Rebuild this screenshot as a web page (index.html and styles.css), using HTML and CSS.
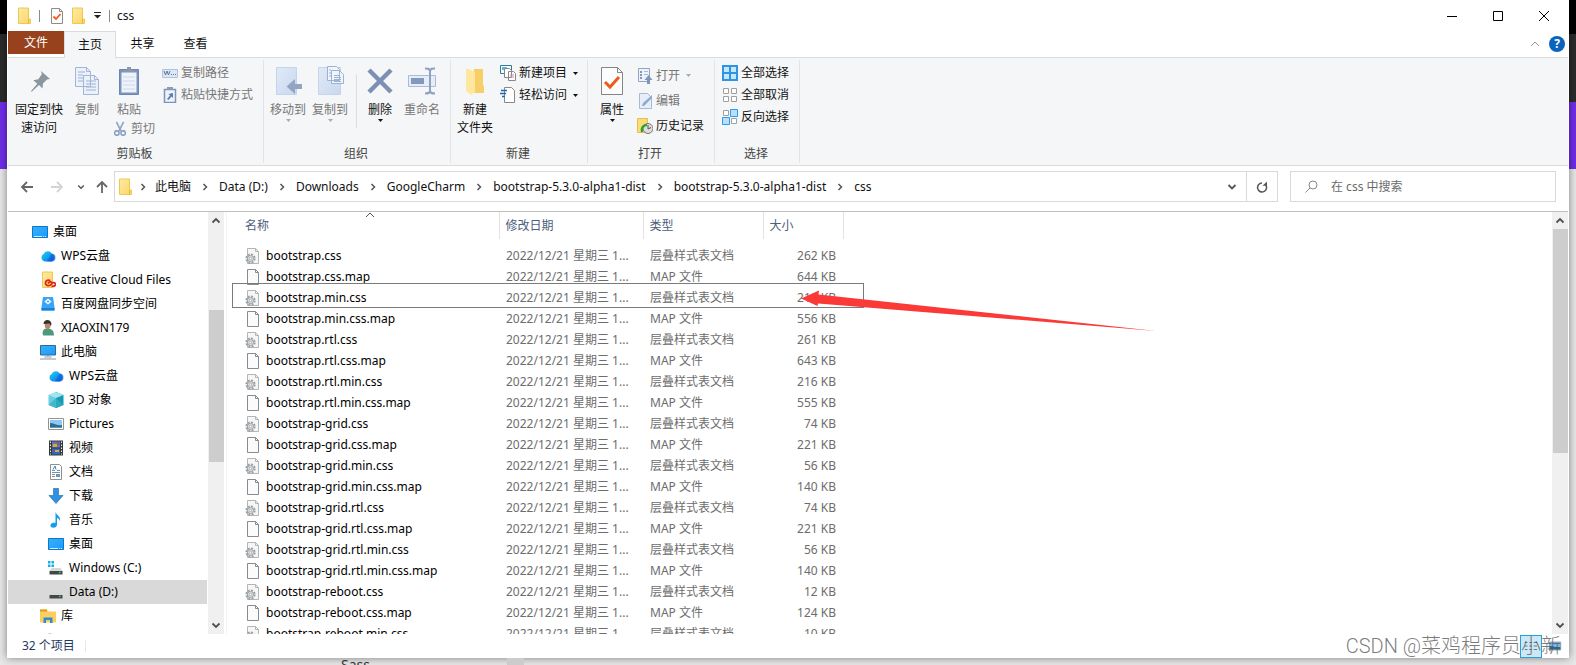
FILE: index.html
```html
<!DOCTYPE html>
<html lang="zh-CN">
<head>
<meta charset="utf-8">
<title>css</title>
<link rel="stylesheet" href="styles.css">
</head>
<body>
<svg class="sprite" aria-hidden="true">
  <defs>
    <linearGradient id="g-folder" x1="0" y1="0" x2="1" y2="1"><stop offset="0" stop-color="#ffeaa5"/><stop offset="1" stop-color="#fbd566"/></linearGradient>
    <linearGradient id="g-cloud" x1="0" y1="0" x2="1" y2="1"><stop offset="0" stop-color="#19d8e6"/><stop offset=".6" stop-color="#1296f0"/><stop offset="1" stop-color="#0a4fd0"/></linearGradient>
    <linearGradient id="g-screen" x1="0" y1="0" x2="1" y2="1"><stop offset="0" stop-color="#3bb0fb"/><stop offset=".5" stop-color="#2aa5fb"/><stop offset="1" stop-color="#149aff"/></linearGradient>
    <linearGradient id="g-pale" x1="0" y1="0" x2="1" y2="1"><stop offset="0" stop-color="#e0eaf8"/><stop offset="1" stop-color="#c9d8ef"/></linearGradient>
  </defs>
  <symbol id="folder" viewBox="0 0 16 18"><path d="M1.500 1h10v11h2v4.500h-12z" fill="url(#g-folder)" stroke="#ecca50"/><path d="M11.500 12v4.500" stroke="#e5b93a"/></symbol>
  <symbol id="check" viewBox="0 0 16 18"><path d="M2.500 1.500h8l3 3v12h-11z" fill="#fbfbfb" stroke="#8c8c8c"/><path d="M10.500 1.500v3h3" fill="none" stroke="#8c8c8c"/><path d="m4.500 9.500 2.500 2.500 4.500-5" fill="none" stroke="#f05a1e" stroke-width="1.800"/></symbol>
  <symbol id="caret" viewBox="0 0 5 3"><path d="M0 0h5L2.500 3z" fill="currentColor"/></symbol>
  <symbol id="chev" viewBox="0 0 8 8"><path d="m2.500 1 3 3-3 3" fill="none" stroke="currentColor" stroke-width="1.500"/></symbol>
  <symbol id="down" viewBox="0 0 10 10"><path d="m1.500 3 3.500 3.500L8.500 3" fill="none" stroke="currentColor" stroke-width="1.800"/></symbol>
  <symbol id="up" viewBox="0 0 10 10"><path d="M1.500 7 5 3.500 8.500 7" fill="none" stroke="currentColor" stroke-width="1.800"/></symbol>
  <symbol id="upthin" viewBox="0 0 10 10"><path d="M1 7l4-4 4 4" fill="none" stroke="currentColor"/></symbol>
  <symbol id="blank" viewBox="0 0 16 18"><path d="M2.500 1.500h8l3 3v12h-11z" fill="#fafbfc" stroke="#8b8b8b"/><path d="M10.500 1.500v3h3" fill="none" stroke="#8b8b8b"/></symbol>
  <symbol id="cssfile" viewBox="0 0 16 18"><path d="M2.500 1.500h8l3 3v12h-11z" fill="#f6f6f6" stroke="#b5b5b5"/><path d="M10.500 1.500v3h3" fill="none" stroke="#b5b5b5"/><circle cx="5.500" cy="11.500" r="4.200" fill="none" stroke="#9a9fa3" stroke-width="1.800" stroke-dasharray="2 1.300"/><circle cx="5.500" cy="11.500" r="3" fill="#e6e8e9" stroke="#969b9f"/><circle cx="5.500" cy="11.500" r="1.200" fill="#fff" stroke="#969b9f" stroke-width=".8"/></symbol>
  <symbol id="desktop" viewBox="0 0 16 16"><path d="M.5 2.500h15v11H.5z" fill="url(#g-screen)" stroke="#0a78c8"/><path d="M2 12.500h8m1 0h1m1 0h1" stroke="#d6efff"/></symbol>
  <symbol id="cloud" viewBox="0 0 16 16"><path d="M4.500 13.500a4 4 0 0 1-.8-7.500 4.500 4.500 0 0 1 8-.6A4.200 4.200 0 0 1 11.500 13.500z" fill="url(#g-cloud)"/><path d="M11.500 5.500a4 4 0 0 1 0 8H7z" fill="#0b5bd9" opacity=".6"/></symbol>
  <symbol id="cc" viewBox="0 0 16 18"><path d="M2.500 1h10v15.500h-10z" fill="url(#g-folder)" stroke="#ecca50"/><path d="M10.500 9.500c-4-1-5 1-5 2.500 0 3 4 3.500 6 1 1-1.500 3-2 4 0 .5 1.500-2 2.700-4 2.200M8 12.500c1-2 4-2.500 4.500.5" fill="none" stroke="#e0251b" stroke-width="1.800"/></symbol>
  <symbol id="baidu" viewBox="0 0 16 16"><path d="M3 1h10l1.500 10v3.500h-13V11z" fill="#3aa5f8"/><path d="M1.500 12h13v2.500h-13z" fill="#1683d8"/><path d="m8 2.500 3.500 3L8 8.500l-3.500-3z" fill="#fff"/><path d="m8 4.300 1.500 1.200L8 6.800 6.500 5.500z" fill="#3aa5f8"/></symbol>
  <symbol id="user" viewBox="0 0 16 18"><path d="M3 16c-1-3 0-6.500 4-6.500 5 0 7 2 7 7H3z" fill="#4c9a7c"/><path d="M4.500 4c0-2.500 6-2.500 6 0v3c0 4-5 4-5.500 1z" fill="#b98a6a"/><path d="M3.500 5c0-5 7.500-5.500 8 0l-.8 2L9.500 4.500z" fill="#37312e"/></symbol>
  <symbol id="pc" viewBox="0 0 16 16"><path d="M.5 1.500h15v9.500H.5z" fill="url(#g-screen)" stroke="#2c6d96"/><path d="M7 11.500h2M4.500 13h7M0 15h16" stroke="#8495a6"/></symbol>
  <symbol id="cube" viewBox="0 0 16 16"><path d="M8 0v16L.5 13V3z" fill="#69cfdf"/><path d="M8 0v16l7.500-3V3z" fill="#1599b4"/><path d="m.5 3 7.500 3 7.500-3L8 .3z" fill="#a2e5ee"/><path d="m8 6-7.500 7L8 16z" fill="#43b7cc"/><path d="m8 6 7.500 7L8 16z" fill="#2aaac3"/></symbol>
  <symbol id="pic" viewBox="0 0 16 16"><path d="M.5 2.500h15v11H.5z" fill="#fff" stroke="#939393"/><path d="M2 4h12v8H2z" fill="#8ec8f4"/><path d="M2 7c4 0 6 3 12 2v3H2z" fill="#346d80"/><path d="M2 11h12v1H2z" fill="#5b9ac0"/></symbol>
  <symbol id="film" viewBox="0 0 16 16"><path d="M1 .5h14v15H1z" fill="#35383d"/><path d="M4 1.500h8v6H4z" fill="#5677c4"/><path d="M4 8.500h8v6H4z" fill="#3566bb"/><path d="M5 4h4v3H5zM7 10h4v2H7z" fill="#dba832"/><path d="M9 2h2v3H9z" fill="#b44935"/><path d="M2.500 1.500v13m11-13v13" stroke="#eee" stroke-dasharray="1.500 1.500"/></symbol>
  <symbol id="doc" viewBox="0 0 16 16"><path d="M2.500.5h9l2 2v13h-11z" fill="#fff" stroke="#909090"/><path d="M4 6.500h3m2 0h3M4 8.500h8m-8 2h3m-3 2h3" stroke="#7891a8"/><path d="M5 5.500 7 2l1 3.500" fill="none" stroke="#238bd5"/><path d="M8 10h4v3H8z" fill="#6598b4"/></symbol>
  <symbol id="dl" viewBox="0 0 16 16"><path d="M5.500.5h5v7h4.500L8 15.500 1 7.500h4.500z" fill="#338fdf" stroke="#2474bb" stroke-width=".7"/></symbol>
  <symbol id="note" viewBox="0 0 16 16"><path d="M7.500 0c1 3.500 5.500 4 4.500 9-.5-2-2-3-3-3v6.500c0 4-6 4-6.500 1.500-.5-3 3-4 5-3z" fill="#169bf0"/></symbol>
  <symbol id="drive" viewBox="0 0 16 16"><path d="m3.500 8-2 3h13l-2-3z" fill="#d6d7d8"/><path d="M1.500 11h13v3.500h-13z" fill="#42474a"/><path d="M11 12.500h1.500" stroke="#44db5b" stroke-width="1.500"/></symbol>
  <symbol id="windrive" viewBox="0 0 16 16"><path d="m3.500 8-2 3h13l-2-3z" fill="#d6d7d8"/><path d="M1.500 11h13v3.500h-13z" fill="#42474a"/><path d="M11 12.500h1.500" stroke="#44db5b" stroke-width="1.500"/><path d="M0 1h2.500v2.500H0zm3.500 0H6v2.500H3.500zM0 4.500h2.500V7H0zm3.500 0H6V7H3.500z" fill="#14aee8"/></symbol>
  <symbol id="library" viewBox="0 0 16 16"><path d="M0 1.500h7l1 2h8v11H0z" fill="#fbcf5f"/><path d="M0 1.500h7v2H0z" fill="#d99e19"/><path d="M3.500 15V9.500h9V15h-2.500v-3H6v3z" fill="#2f8bd8"/></symbol>
</svg>

<main class="window">
  <header class="titlebar">
    <svg class="i16"><use href="#folder"/></svg><span class="tick"></span>
    <button class="plain" aria-label="属性"><svg class="i16"><use href="#check"/></svg></button>
    <button class="plain" aria-label="新建文件夹"><svg class="i16"><use href="#folder"/></svg></button>
    <button class="plain custom" aria-label="自定义快速访问工具栏"><svg width="7" height="7" viewBox="0 0 7 7"><path d="M0 .5h7" stroke="#222"/><path d="M0 3h7L3.500 6.500z" fill="#222"/></svg></button>
    <span class="tick"></span><h1>css</h1>
    <div class="winbtns">
      <button aria-label="最小化"><svg viewBox="0 0 10 10"><path d="M0 5.500h10" stroke="#000"/></svg></button>
      <button aria-label="最大化"><svg viewBox="0 0 10 10"><path d="M.5.5h9v9h-9z" fill="none" stroke="#000"/></svg></button>
      <button aria-label="关闭"><svg viewBox="0 0 10 10"><path d="m0 0 10 10M10 0 0 10" stroke="#000"/></svg></button>
    </div>
  </header>

  <div class="tabs">
    <button class="file">文件</button><button class="on">主页</button><button>共享</button><button>查看</button>
    <div class="help"><button class="plain" aria-label="折叠功能区"><svg width="10" height="10"><use href="#upthin"/></svg></button><button class="q" aria-label="帮助">?</button></div>
  </div>

  <section class="ribbon">
    <div class="group clip">
      <div class="tools">
        <button class="big pin"><svg viewBox="0 0 28 30"><path d="m16 5 9 8-3 .5-4 4-.5 5-3.500-3.500-7 6.500-1 .3.300-1 6-7-4-3.500 5-1 3.500-5z" fill="#8a979e"/></svg><span>固定到快<br>速访问</span></button>
        <button class="big off"><svg viewBox="0 0 28 30"><path d="M2.500 1.500h11l4 4v15h-15zM10.500 9.500h11l4 4v15h-15z" fill="#eaf1fb" stroke="#a3b6d3"/><path d="M5 6h7M5 9h5M5 12h5M5 15h5M13 15h10M13 18h10M13 21h10M13 24h10" stroke="#9db3d6"/><path d="M13.500 1.500v4h4M21.500 9.500v4h4" fill="none" stroke="#a3b6d3"/></svg><span>复制</span></button>
        <div class="stack paste">
          <button class="big off"><svg viewBox="0 0 28 30"><path d="M4.500 3.500h19v25h-19z" fill="#7d95be" stroke="#6d86b1"/><path d="M6.500 6.500h15v20h-15z" fill="#eef3fa"/><path d="M9 6V4h3V1h4v3h3v2z" fill="#8d99ab"/><path d="M8 11h12M8 15h12M8 19h12M8 23h12" stroke="#cbd9ed"/></svg><span>粘贴</span></button>
          <button class="small off"><svg viewBox="0 0 16 18"><path d="M4 1l5 10M12 1 7 11" stroke="#91a3c2" stroke-width="1.800"/><circle cx="4.500" cy="13.500" r="2.500" fill="none" stroke="#7f96bd" stroke-width="1.500"/><circle cx="11.500" cy="13.500" r="2.500" fill="none" stroke="#7f96bd" stroke-width="1.500"/></svg>剪切</button>
        </div>
        <div class="stack side">
          <button class="small off"><svg viewBox="0 0 16 16"><path d="M.5 4.500h15v8H.5z" fill="#dce7f6" stroke="#b0c2de"/><path d="m2 6 1.500 4L5 6l1.500 4L8 6M9 9.500h1m1 0h1m1 0h1" fill="none" stroke="#63779a"/></svg>复制路径</button>
          <button class="small off"><svg viewBox="0 0 16 16"><path d="M2.500 2.500h11v13h-11z" fill="#eef3fa" stroke="#7d94ba" stroke-width="1.500"/><path d="M5 0h6v3H5z" fill="#8c9cb5"/><path d="M11 6v5L9.500 9.500 6.500 13 5 12l3-3.500L6.500 7z" fill="#5e7cab"/></svg>粘贴快捷方式</button>
        </div>
      </div>
      <h2>剪贴板</h2>
    </div>
    <div class="group org">
      <div class="tools">
        <button class="big off"><svg viewBox="0 0 28 30"><path d="M2.500 1.500h20v27h-20z" fill="url(#g-pale)" stroke="#c5d4ea"/><path d="M28 18v5h-7v5l-8.500-7.500L21 13v5z" fill="#93a5c3"/></svg><span>移动到</span><svg class="car"><use href="#caret"/></svg></button>
        <button class="big off"><svg viewBox="0 0 28 30"><path d="M2.500 1.500h22v27h-22z" fill="url(#g-pale)" stroke="#c5d4ea"/><path d="M11.500.5h9l3 3v11h-12zM15.500 4.500h8l4 4v9h-12z" fill="#f0f4fb" stroke="#9db1d0"/><path d="M18 9.500h6M18 11.500h7M18 13.500h7M18 15.500h7M13 4h2M13 7h2M13 10h2" stroke="#9db1d0"/></svg><span>复制到</span><svg class="car"><use href="#caret"/></svg></button>
        <span class="rule"></span>
        <button class="big"><svg viewBox="0 0 28 30"><path d="m3 4 22 22M25 4 3 26" stroke="#7c90b5" stroke-width="4.500"/></svg><span>删除</span><svg class="car"><use href="#caret"/></svg></button>
        <button class="big off"><svg viewBox="0 0 28 30"><path d="M.5 9.500h27v11H.5z" fill="#e5edf8" stroke="#aabbd7"/><path d="M3 12h13v6H3z" fill="#8498bd"/><path d="M17 2.500c3 0 4 0 5 2 1-2 2-2 5-2M17 27.500c3 0 4 0 5-2 1 2 2 2 5 2M22 4v22" fill="none" stroke="#8fa2c3" stroke-width="2"/></svg><span>重命名</span></button>
      </div>
      <h2>组织</h2>
    </div>
    <div class="group new">
      <div class="tools">
        <button class="big"><svg viewBox="0 0 28 30"><path d="M13 3h9v16l1 1v7H12z" fill="#f6d067"/><path d="M5 3h3l6 3v20l-4 3-5-4z" fill="#ffe7a0"/></svg><span>新建<br>文件夹</span></button>
        <div class="stack">
          <button class="small"><svg viewBox="0 0 16 16"><path d="M.5.500h11v8H.5z" fill="#fff" stroke="#2e7c9e"/><path d="M2 2h5v3H2z" fill="#60b6d5"/><path d="M4.500 3.500h5l2 2v7h-7zM8.500 6.500h5l2 2v7h-7z" fill="#fff" stroke="#888"/><path d="M10 10h4m-4 2h4" stroke="#d78c9e"/></svg>新建项目<svg class="car"><use href="#caret"/></svg></button>
          <button class="small"><svg viewBox="0 0 16 16"><path d="M4.500.5h7l3 3v12h-10z" fill="#fff" stroke="#888"/><path d="M1 3.500h6m-7 3h6m-4 3h3" stroke="#1f69b5" stroke-width="1.500"/></svg>轻松访问<svg class="car"><use href="#caret"/></svg></button>
        </div>
      </div>
      <h2>新建</h2>
    </div>
    <div class="group open">
      <div class="tools">
        <button class="big"><svg viewBox="0 0 28 30"><path d="M3.500 1.500h16l5 5v22h-21z" fill="#fcfcfc" stroke="#858585"/><path d="M19.500 1.500v5h5" fill="none" stroke="#858585"/><path d="m7 16 5 5 9-10" fill="none" stroke="#f15a1d" stroke-width="3"/></svg><span>属性</span><svg class="car"><use href="#caret"/></svg></button>
        <div class="stack wide">
          <button class="small off"><svg viewBox="0 0 16 16"><path d="M1.500.500h11v13h-11z" fill="#edf3fb" stroke="#91a5c7"/><path d="M3 4h2M3 7h2M3 10h2" stroke="#8297bb" stroke-width="2"/><path d="M7 3.500h4M7 6.500h4" stroke="#a9bad6"/><path d="M11.500 7l4 5H13v4h-3v-4H7.500z" fill="#7f96bc"/></svg>打开<svg class="car"><use href="#caret"/></svg></button>
          <button class="small off"><svg viewBox="0 0 16 16"><path d="M2.500.500h8l4 4v11h-12z" fill="#e6eefa" stroke="#a5b9d8"/><path d="m5 13 1-3 9-8v3l-8 8z" fill="#91a9ce"/></svg>编辑</button>
          <button class="small"><svg viewBox="0 0 16 16"><path d="M.5.5h10v14H.5z" fill="#fbdc79" stroke="#e4c14b"/><circle cx="11" cy="10.500" r="5" fill="#ddd" stroke="#777"/><path d="M11 7v4l3-1.500" fill="none" stroke="#555"/><path d="M5 14c-1-4 1-7 5-7" fill="none" stroke="#23a030" stroke-width="2.200"/></svg>历史记录</button>
        </div>
      </div>
      <h2>打开</h2>
    </div>
    <div class="group select">
      <div class="tools">
        <div class="stack">
          <button class="small"><svg viewBox="0 0 16 16"><path d="M1 1h14v14H1zM8 0v16M0 8h16" fill="#c5e7ff" stroke="#2f94e4" stroke-width="2"/></svg>全部选择</button>
          <button class="small"><svg viewBox="0 0 16 16"><path d="M1.500 1.500h5v5h-5zm8 0h5v5h-5zm-8 8h5v5h-5zm8 0h5v5h-5z" fill="#fff" stroke="#a0a0a0"/></svg>全部取消</button>
          <button class="small"><svg viewBox="0 0 16 16"><path d="M1.500 1.500h5v5h-5zm8 8h5v5h-5z" fill="#fff" stroke="#a0a0a0"/><path d="M8.500.500h7v7h-7zm-8 8h7v7h-7z" fill="#b6e0ff" stroke="#3699e5"/></svg>反向选择</button>
        </div>
      </div>
      <h2>选择</h2>
    </div>
  </section>

  <div class="addressbar">
    <div class="navs">
      <button class="plain" aria-label="后退"><svg width="14" height="14" viewBox="0 0 14 14"><path d="M13 7H2m5-5L2 7l5 5" fill="none" stroke="#666" stroke-width="1.800"/></svg></button>
      <button class="plain" aria-label="前进"><svg width="14" height="14" viewBox="0 0 14 14"><path d="M1 7h11M7 2l5 5-5 5" fill="none" stroke="#d4d4d4" stroke-width="1.800"/></svg></button>
      <button class="plain recent" aria-label="最近浏览的位置"><svg width="8" height="8"><use href="#down"/></svg></button>
      <button class="plain" aria-label="向上"><svg width="14" height="14" viewBox="0 0 14 14"><path d="M7 13V2M2 7l5-5 5 5" fill="none" stroke="#666" stroke-width="1.800"/></svg></button>
    </div>
    <div class="path">
      <svg class="i16"><use href="#folder"/></svg>
      <svg class="sep"><use href="#chev"/></svg><a href="#">此电脑</a>
      <svg class="sep"><use href="#chev"/></svg><a href="#">Data (D:)</a>
      <svg class="sep"><use href="#chev"/></svg><a href="#">Downloads</a>
      <svg class="sep"><use href="#chev"/></svg><a href="#">GoogleCharm</a>
      <svg class="sep"><use href="#chev"/></svg><a href="#">bootstrap-5.3.0-alpha1-dist</a>
      <svg class="sep"><use href="#chev"/></svg><a href="#">bootstrap-5.3.0-alpha1-dist</a>
      <svg class="sep"><use href="#chev"/></svg><a href="#">css</a>
      <button class="plain drop" aria-label="以前的位置"><svg width="10" height="10"><use href="#down"/></svg></button>
      <button class="plain refresh" aria-label="刷新"><svg width="12" height="12" viewBox="0 0 12 12"><path d="M9.800 4A4.500 4.500 0 1 1 6 2" fill="none" stroke="#555" stroke-width="1.500"/><path d="M6.500 4.800H11V.5z" fill="#555"/></svg></button>
    </div>
    <label class="search"><svg width="13" height="13" viewBox="0 0 13 13"><circle cx="8" cy="5" r="4" fill="none" stroke="#888"/><path d="M5 8 .5 12.500" stroke="#888"/></svg><input type="search" aria-label="搜索" placeholder="在 css 中搜索"></label>
  </div>

  <div class="content">
    <nav class="tree">
      <a href="#" class="l1"><svg><use href="#desktop"/></svg>桌面</a>
      <a href="#" class="l2"><svg><use href="#cloud"/></svg>WPS云盘</a>
      <a href="#" class="l2"><svg class="tall"><use href="#cc"/></svg>Creative Cloud Files</a>
      <a href="#" class="l2"><svg><use href="#baidu"/></svg>百度网盘同步空间</a>
      <a href="#" class="l2"><svg class="tall"><use href="#user"/></svg>XIAOXIN179</a>
      <a href="#" class="l2"><svg><use href="#pc"/></svg>此电脑</a>
      <a href="#" class="l3"><svg><use href="#cloud"/></svg>WPS云盘</a>
      <a href="#" class="l3"><svg><use href="#cube"/></svg>3D 对象</a>
      <a href="#" class="l3"><svg><use href="#pic"/></svg>Pictures</a>
      <a href="#" class="l3"><svg><use href="#film"/></svg>视频</a>
      <a href="#" class="l3"><svg><use href="#doc"/></svg>文档</a>
      <a href="#" class="l3"><svg><use href="#dl"/></svg>下载</a>
      <a href="#" class="l3"><svg><use href="#note"/></svg>音乐</a>
      <a href="#" class="l3"><svg><use href="#desktop"/></svg>桌面</a>
      <a href="#" class="l3"><svg><use href="#windrive"/></svg>Windows (C:)</a>
      <a href="#" class="l3 current"><svg><use href="#drive"/></svg>Data (D:)</a>
      <a href="#" class="l2"><svg><use href="#library"/></svg>库</a>
      <a href="#" class="l2" aria-label="网络"><svg viewBox="0 0 16 16"><circle cx="10" cy="8" r="6" fill="#9ccbdc" stroke="#5b9db5"/></svg></a>
    </nav>
    <div class="scroll treescroll"><svg><use href="#up"/></svg><span class="thumb"></span><svg><use href="#down"/></svg></div>
    <div class="files">
      <svg class="sort"><use href="#upthin"/></svg>
      <table>
        <colgroup><col class="c-name"><col class="c-date"><col class="c-type"><col class="c-size"></colgroup>
        <thead><tr><th>名称</th><th>修改日期</th><th>类型</th><th>大小</th></tr></thead>
        <tbody>
          <tr><td><svg><use href="#cssfile"/></svg>bootstrap.css</td><td>2022/12/21 星期三 1...</td><td>层叠样式表文档</td><td>262 KB</td></tr>
          <tr><td><svg><use href="#blank"/></svg>bootstrap.css.map</td><td>2022/12/21 星期三 1...</td><td>MAP 文件</td><td>644 KB</td></tr>
          <tr><td><svg><use href="#cssfile"/></svg>bootstrap.min.css</td><td>2022/12/21 星期三 1...</td><td>层叠样式表文档</td><td>216 KB</td></tr>
          <tr><td><svg><use href="#blank"/></svg>bootstrap.min.css.map</td><td>2022/12/21 星期三 1...</td><td>MAP 文件</td><td>556 KB</td></tr>
          <tr><td><svg><use href="#cssfile"/></svg>bootstrap.rtl.css</td><td>2022/12/21 星期三 1...</td><td>层叠样式表文档</td><td>261 KB</td></tr>
          <tr><td><svg><use href="#blank"/></svg>bootstrap.rtl.css.map</td><td>2022/12/21 星期三 1...</td><td>MAP 文件</td><td>643 KB</td></tr>
          <tr><td><svg><use href="#cssfile"/></svg>bootstrap.rtl.min.css</td><td>2022/12/21 星期三 1...</td><td>层叠样式表文档</td><td>216 KB</td></tr>
          <tr><td><svg><use href="#blank"/></svg>bootstrap.rtl.min.css.map</td><td>2022/12/21 星期三 1...</td><td>MAP 文件</td><td>555 KB</td></tr>
          <tr><td><svg><use href="#cssfile"/></svg>bootstrap-grid.css</td><td>2022/12/21 星期三 1...</td><td>层叠样式表文档</td><td>74 KB</td></tr>
          <tr><td><svg><use href="#blank"/></svg>bootstrap-grid.css.map</td><td>2022/12/21 星期三 1...</td><td>MAP 文件</td><td>221 KB</td></tr>
          <tr><td><svg><use href="#cssfile"/></svg>bootstrap-grid.min.css</td><td>2022/12/21 星期三 1...</td><td>层叠样式表文档</td><td>56 KB</td></tr>
          <tr><td><svg><use href="#blank"/></svg>bootstrap-grid.min.css.map</td><td>2022/12/21 星期三 1...</td><td>MAP 文件</td><td>140 KB</td></tr>
          <tr><td><svg><use href="#cssfile"/></svg>bootstrap-grid.rtl.css</td><td>2022/12/21 星期三 1...</td><td>层叠样式表文档</td><td>74 KB</td></tr>
          <tr><td><svg><use href="#blank"/></svg>bootstrap-grid.rtl.css.map</td><td>2022/12/21 星期三 1...</td><td>MAP 文件</td><td>221 KB</td></tr>
          <tr><td><svg><use href="#cssfile"/></svg>bootstrap-grid.rtl.min.css</td><td>2022/12/21 星期三 1...</td><td>层叠样式表文档</td><td>56 KB</td></tr>
          <tr><td><svg><use href="#blank"/></svg>bootstrap-grid.rtl.min.css.map</td><td>2022/12/21 星期三 1...</td><td>MAP 文件</td><td>140 KB</td></tr>
          <tr><td><svg><use href="#cssfile"/></svg>bootstrap-reboot.css</td><td>2022/12/21 星期三 1...</td><td>层叠样式表文档</td><td>12 KB</td></tr>
          <tr><td><svg><use href="#blank"/></svg>bootstrap-reboot.css.map</td><td>2022/12/21 星期三 1...</td><td>MAP 文件</td><td>124 KB</td></tr>
          <tr><td><svg><use href="#cssfile"/></svg>bootstrap-reboot.min.css</td><td>2022/12/21 星期三 1...</td><td>层叠样式表文档</td><td>10 KB</td></tr>
        </tbody>
      </table>
      <span class="marker"></span>
      <svg class="pointer" viewBox="0 0 355 42"><path d="m0 8.500 18-8-.5 4L355 41 17 13.500l-.5 2.500z" fill="#fb3a38"/></svg>
    </div>
    <div class="scroll filescroll"><svg><use href="#up"/></svg><span class="thumb"></span><svg><use href="#down"/></svg></div>
  </div>

  <footer class="status">
    <span class="count">32 个项目</span>
    <div class="views">
      <button class="on" aria-label="详细信息"><svg viewBox="0 0 16 16"><path d="M1 4h3m2 0h3m2 0h4M1 8h3m2 0h3m2 0h4M1 12h3m2 0h3m2 0h4" stroke="#53717e"/></svg></button>
      <button aria-label="大图标"><svg viewBox="0 0 16 16"><path d="M1.500 3.500h13v9h-13z" fill="#78b9ee" stroke="#89a"/><path d="M2 8c4 0 6 2 12 1v3H2z" fill="#356780"/></svg></button>
    </div>
    <span class="watermark">CSDN @菜鸡程序员小新</span>
  </footer>
</main>
<div class="behind"><span>Sass</span><i></i></div>
</body>
</html>
```
FILE: styles.css
```css
* { box-sizing: border-box; }
body {
  margin: 0;
  height: 100vh;
  overflow: hidden;
  display: flex;
  flex-direction: column;
  font: 12px/18px "Noto Sans", "Noto Sans CJK SC", sans-serif;
  color: #111;
  background: linear-gradient(#000 34px, #2b2b2b 34px 102px, #702ee8 102px 169px, #e6e6e6 169px);
}
button { font: inherit; color: inherit; border: 0; background: none; padding: 0; margin: 0; }
a { color: inherit; text-decoration: none; }
svg { flex: none; display: block; }
h1, h2 { margin: 0; font: inherit; }
.sprite { position: absolute; width: 0; height: 0; }
.i16 { width: 16px; height: 18px; }

.window {
  flex: 1;
  min-height: 0;
  margin: 0 7px;
  padding: 0 1px;
  display: flex;
  flex-direction: column;
  background: #fff;
  box-shadow: 0 0 8px rgba(0, 0, 0, .45);
}

.titlebar { height: 31px; flex: none; display: flex; align-items: center; padding: 0 1px 0 9px; }
.tick { width: 1px; height: 12px; background: #8a8a8a; margin: 0 9px 0 6px; }
.titlebar .plain + .plain { margin-left: 6px; }
.titlebar .plain + .custom { margin-left: 7px; }
.titlebar .custom + .tick { margin: 0 7px 0 8px; }
.winbtns { margin-left: auto; display: flex; }
.winbtns button { width: 46px; height: 30px; display: grid; place-items: center; }
.winbtns svg { width: 10px; height: 10px; }

.tabs { height: 27px; flex: none; display: flex; border-bottom: 1px solid #dadbdc; }
.tabs > button { width: 53px; height: 26px; }
.tabs > .file { width: 56px; height: 23px; background: #97421d; color: #fff; }
.tabs > .on { width: 52px; height: 27px; background: #f5f6f7; border: 1px solid #dadbdc; border-bottom: 0; }
.help { margin-left: auto; display: flex; align-items: center; gap: 9px; padding-right: 3px; color: #999; }
.help .q { width: 16px; height: 16px; border-radius: 50%; background: #0b63be; color: #fff; font-weight: 700; line-height: 16px; }

.ribbon { height: 108px; flex: none; display: flex; background: #f5f6f7; border-bottom: 1px solid #dadbdc; padding: 2px 0; }
.group { border-right: 1px solid #e2e3e4; display: flex; flex-direction: column; }
.group h2 { text-align: center; color: #444; margin-top: auto; padding-right: 2px; }
.clip { width: 256px; }
.org { width: 187px; }
.new { width: 137px; }
.open { width: 127px; }
.select { width: 85px; }
.tools { display: flex; align-items: flex-start; padding-top: 6px; }
.big { width: 42px; display: flex; flex-direction: column; align-items: center; white-space: nowrap; }
.big > svg { width: 28px; height: 30px; margin-bottom: 5px; }
.big .car { width: 5px; height: 3px; margin: 0; }
.pin { width: 54px; margin-left: 4px; }
.off { color: #777; }
.small { display: flex; align-items: center; gap: 3px; height: 22px; white-space: nowrap; }
.small svg { width: 16px; height: 16px; }
.small .car { width: 5px; height: 3px; margin-left: 3px; }
.off .car { color: #aaa; }
.stack { display: flex; flex-direction: column; margin-top: -4px; }
.paste { margin-top: 0; }
.paste .small { height: 20px; padding-left: 4px; }
.side { padding-left: 7px; }
.org .tools { padding-left: 3px; }
.rule { width: 1px; height: 54px; background: #dcdddf; margin: 8px 2px 0 5px; }
.new .tools { padding-left: 3px; }
.new .stack { padding-left: 4px; }
.open .tools { padding-left: 3px; }
.open .stack { padding-left: 4px; margin-top: -3px; }
.open .small { height: 25px; }
.select .tools { padding-left: 7px; }

.addressbar { height: 46px; flex: none; display: flex; align-items: center; padding: 0 12px 4px 0; border-bottom: 1px solid #bfbfbf; }
.navs { width: 106px; display: flex; align-items: center; padding-left: 12px; gap: 16px; color: #555; }
.navs .recent { margin: 0 -6px 0 -3px; }
.path { flex: 1; height: 31px; display: flex; align-items: center; border: 1px solid #d9d9d9; padding-left: 3px; color: #111; white-space: nowrap; }
.sep { width: 8px; height: 8px; margin: 0 10px; color: #555; }
.path .i16 + .sep { margin: 0 8px 0 5px; }
.drop { margin-left: auto; width: 28px; height: 29px; display: grid; place-items: center; color: #555; }
.refresh { width: 31px; height: 29px; border-left: 1px solid #d9d9d9; display: grid; place-items: center; }
.search { width: 266px; height: 31px; margin-left: 12px; border: 1px solid #d9d9d9; display: flex; align-items: center; padding-left: 14px; gap: 13px; }
.search input { border: 0; outline: 0; font: inherit; flex: 1; min-width: 0; padding: 0; background: none; }
.search input::placeholder { color: #6a6a6a; }

.content { flex: 1; min-height: 0; display: flex; overflow: hidden; }
.tree { width: 199px; flex: none; padding-top: 8px; overflow: hidden; }
.tree a { display: flex; align-items: center; height: 24px; gap: 5px; white-space: nowrap; color: #000; }
.tree svg { width: 16px; height: 16px; }
.tree .tall { height: 18px; }
.l1 { padding-left: 24px; }
.l2 { padding-left: 32px; }
.l3 { padding-left: 40px; }
.current { background: #d9d9d9; }
.scroll { width: 16px; flex: none; display: flex; flex-direction: column; align-items: center; background: #f0f0f0; color: #505050; }
.scroll svg { width: 10px; height: 17px; }
.scroll svg:last-child { margin-top: auto; }
.thumb { width: 15px; background: #cdcdcd; }
.treescroll { margin-left: 1px; }
.treescroll .thumb { margin-top: 81px; flex: 0 0 36%; }
.filescroll .thumb { flex: 0 0 53%; }

.files { flex: 1; min-width: 0; position: relative; overflow: hidden; margin-left: 2px; padding-left: 5px; border-left: 1px solid #f4f4f4; }
table { table-layout: fixed; width: 611px; border-collapse: collapse; }
.c-name { width: 267px; }
.c-date { width: 144px; }
.c-type { width: 120px; }
.c-size { width: 80px; }
th { height: 27px; padding: 0 0 0 6px; font-weight: 400; text-align: left; color: #4c607a; border-right: 1px solid #e3e3e3; }
th:first-child { padding-left: 13px; }
tbody::before { content: ""; display: block; height: 6px; }
td { height: 21px; padding: 0 0 0 7px; color: #6d6d6d; white-space: nowrap; overflow: hidden; }
td:first-child { color: #000; padding-left: 13px; }
td:last-child { text-align: right; padding-right: 7px; }
td svg { width: 16px; height: 18px; float: left; margin: 0 5px 0 0; }
.sort { position: absolute; left: 138px; top: -2px; width: 10px; height: 10px; color: #555; }
.marker { position: absolute; left: 5px; top: 71px; width: 632px; height: 25px; border: 1px solid #7a7a7a; }
.pointer { position: absolute; left: 574px; top: 78px; width: 355px; height: 42px; }

.status { height: 24px; flex: none; position: relative; display: flex; align-items: center; justify-content: space-between; padding: 0 2px 0 14px; color: #1e3a5f; }
.count { padding-right: 10px; border-right: 1px solid #e8e8e8; line-height: 12px; }
.views { display: flex; gap: 2px; }
.views button { width: 22px; height: 23px; display: grid; place-items: center; }
.views .on { background: #cce8f6; border: 1px solid #26a0da; }
.views svg { width: 14px; height: 14px; }
.watermark { position: absolute; right: 7px; top: 0; font-size: 20px; line-height: 24px; color: rgba(80, 80, 80, .75); font-family: Roboto, "Noto Sans CJK SC", sans-serif; font-weight: 300; white-space: nowrap; }

.behind { height: 7px; flex: none; overflow: hidden; display: flex; color: #333; padding-left: 341px; }
.behind span { width: 166px; font-size: 14px; line-height: 14px; }
.behind i { width: 17px; background: #ccc; }
```
